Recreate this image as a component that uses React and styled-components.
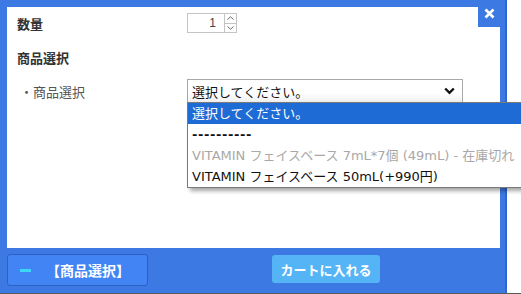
import React, { useState } from 'react';
import styled, { createGlobalStyle } from 'styled-components';

const GlobalStyle = createGlobalStyle`
  html, body {
    margin: 0;
    padding: 0;
    background: #ffffff;
    overflow: hidden;
  }
  body {
    font-family: "Open Sans", "Noto Sans CJK JP", sans-serif;
    color: #333333;
  }
`;

const Page = styled.div`
  width: 521px;
  height: 293px;
  border-bottom: 1px solid #5a5a5a;
  position: relative;
  overflow: hidden;
`;

const Modal = styled.div`
  width: 507px;
  height: 293px;
  box-sizing: border-box;
  background: #3c79e2;
  border-right: 2px solid #2e66cf;
  padding: 7px 5px 0 7px;
  display: flex;
  flex-direction: column;
`;

const Panel = styled.div`
  position: relative;
  height: 241px;
  background: #ffffff;
  padding: 6px 0 0 10px;
  box-sizing: border-box;
`;

const CloseButton = styled.button`
  position: absolute;
  top: -7px;
  right: 0;
  width: 22px;
  height: 27px;
  border: 0;
  padding: 0;
  background: #3c79e2;
  display: flex;
  align-items: center;
  justify-content: center;
  cursor: pointer;
`;

const FormRow = styled.div`
  display: grid;
  grid-template-columns: 170px 1fr;
  align-items: center;
  min-height: ${props => props.height}px;
`;

const Label = styled.div`
  font-size: 13px;
  font-weight: ${props => (props.bold ? 700 : 400)};
  color: ${props => (props.sub ? '#555555' : '#333333')};
  padding-left: ${props => (props.sub ? 3 : 0)}px;
`;

const Heading = styled.div`
  font-size: 13px;
  font-weight: 700;
  color: #333333;
  padding: 15px 0 12px;
`;

const NumberBox = styled.div`
  display: flex;
  width: 50px;
  height: 20px;
  box-sizing: border-box;
  border: 1px solid #c4c4c4;
  background: #ffffff;
`;

const NumberValue = styled.div`
  flex: 1;
  text-align: right;
  padding-right: 8px;
  font-size: 12px;
  line-height: 18px;
  color: #444444;
  font-family: "Liberation Sans", Arial, sans-serif;
`;

const Spinner = styled.div`
  width: 11px;
  border-left: 1px solid #c4c4c4;
  display: flex;
  flex-direction: column;
`;

const SpinButton = styled.div`
  flex: 1;
  display: flex;
  align-items: center;
  justify-content: center;
  border-top: ${props => (props.down ? '1px solid #c4c4c4' : 'none')};
`;

const SelectWrap = styled.div`
  position: relative;
  width: 276px;
  font-family: "DejaVu Sans", "Noto Sans CJK JP", sans-serif;
`;

const SelectBox = styled.div`
  height: 24px;
  box-sizing: border-box;
  border: 1px solid #a9a9a9;
  background: linear-gradient(#ffffff 60%, #f0f0f0);
  display: flex;
  align-items: center;
  justify-content: space-between;
  padding: 0 7px 0 4px;
  font-size: 13px;
  color: #111111;
`;

const OptionList = styled.ul`
  position: absolute;
  top: 23px;
  left: 0;
  width: 380px;
  margin: 0;
  padding: 0;
  list-style: none;
  background: #ffffff;
  border: 1px solid #7a7a7a;
  box-shadow: 3px 3px 4px rgba(0, 0, 0, 0.35);
  z-index: 10;
`;

const Option = styled.li`
  height: 21px;
  line-height: 21px;
  padding-left: 4px;
  font-size: 13px;
  white-space: nowrap;
  background: ${props => (props.active ? '#1e6bd5' : 'transparent')};
  color: ${props => (props.active ? '#ffffff' : props.disabled ? '#a8a8a8' : '#111111')};
  font-weight: ${props => (props.separator ? 700 : 400)};
  letter-spacing: ${props => (props.separator ? '0.6px' : 'normal')};
`;

const Footer = styled.div`
  flex: 1;
  display: flex;
  align-items: flex-start;
  padding-top: 6px;
  gap: 124px;
`;

const SelectToggle = styled.button`
  width: 141px;
  height: 32px;
  box-sizing: border-box;
  border: 1px solid #2c60c6;
  border-radius: 3px;
  background: #4384f5;
  display: flex;
  align-items: center;
  padding: 0 0 0 12px;
  gap: 15px;
  color: #ffffff;
  font-family: inherit;
  font-size: 14px;
  font-weight: 700;
  cursor: pointer;
`;

const Dash = styled.span`
  display: block;
  width: 11px;
  height: 3px;
  background: #3ed6f6;
`;

const CartButton = styled.button`
  margin-top: 1px;
  width: 108px;
  height: 28px;
  border: 0;
  border-radius: 3px;
  background: #55b4f5;
  color: #ffffff;
  font-family: inherit;
  font-size: 13px;
  font-weight: 700;
  cursor: pointer;
`;

const options = [
  { label: '選択してください。' },
  { label: '----------', separator: true },
  { label: 'VITAMIN フェイスベース 7mL*7個 (49mL) - 在庫切れ', disabled: true },
  { label: 'VITAMIN フェイスベース 50mL(+990円)' },
];

const App = () => {
  const [qty] = useState(1);

  return (
    <Page>
      <GlobalStyle />
      <Modal>
        <Panel>
          <CloseButton aria-label="閉じる">
            <svg width="11" height="11" viewBox="0 0 11 11">
              <path d="M1.5 1.5 L9.5 9.5 M9.5 1.5 L1.5 9.5" stroke="#ffffff" strokeWidth="2.6" />
            </svg>
          </CloseButton>

          <FormRow height={20}>
            <Label bold>数量</Label>
            <NumberBox>
              <NumberValue>{qty}</NumberValue>
              <Spinner>
                <SpinButton>
                  <svg width="7" height="4" viewBox="0 0 7 4">
                    <path d="M0.5 3.5 L3.5 0.8 L6.5 3.5" stroke="#666" fill="none" strokeWidth="1" />
                  </svg>
                </SpinButton>
                <SpinButton down>
                  <svg width="7" height="4" viewBox="0 0 7 4">
                    <path d="M0.5 0.5 L3.5 3.2 L6.5 0.5" stroke="#666" fill="none" strokeWidth="1" />
                  </svg>
                </SpinButton>
              </Spinner>
            </NumberBox>
          </FormRow>

          <Heading>商品選択</Heading>

          <FormRow height={24}>
            <Label sub>・商品選択</Label>
            <SelectWrap>
              <SelectBox>
                <span>選択してください。</span>
                <svg width="11" height="8" viewBox="0 0 11 8">
                  <path d="M1.2 1.5 L5.5 5.8 L9.8 1.5" stroke="#111" fill="none" strokeWidth="2.4" />
                </svg>
              </SelectBox>
              <OptionList role="listbox">
                {options.map((o, i) => (
                  <Option
                    key={i}
                    active={i === 0}
                    disabled={o.disabled}
                    separator={o.separator}>
                    {o.label}
                  </Option>
                ))}
              </OptionList>
            </SelectWrap>
          </FormRow>
        </Panel>

        <Footer>
          <SelectToggle>
            <Dash />
            <span>【商品選択】</span>
          </SelectToggle>
          <CartButton>カートに入れる</CartButton>
        </Footer>
      </Modal>
    </Page>
  );
};

export default App;
